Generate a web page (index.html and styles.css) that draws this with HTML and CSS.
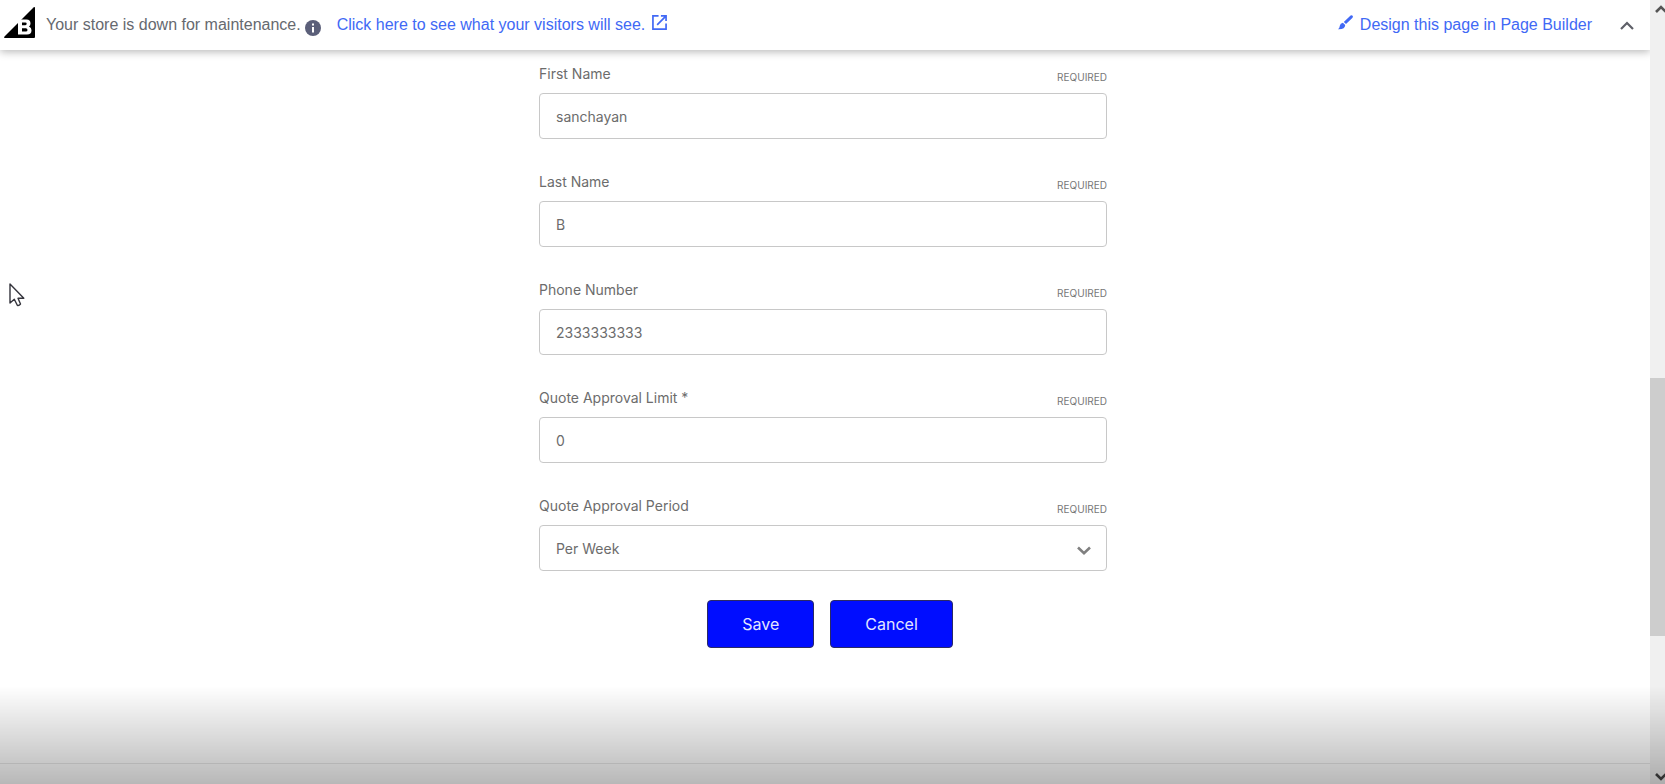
FILE: index.html
```html
<!DOCTYPE html>
<html lang="en">
<head>
<meta charset="utf-8">
<title>Edit user</title>
<link rel="stylesheet" href="styles.css">
</head>
<body>
<div class="page">
  <header class="topbar">
    <svg class="logo" viewBox="0 0 31 31" aria-hidden="true">
      <path fill="#000" d="M29.500 .4Q31 -.4 31 1V30Q31 31 30 31H1Q-.4 31 .5 29.600Z"/>
      <path fill="#fff" fill-rule="evenodd" d="M14 12.500H22.500Q26.500 12.500 26.500 16.500Q26.500 18.500 25 19.500Q27.500 20.500 27.500 23.200Q27.500 27.500 23 27.500H14ZM18 15.400V18.200H21.300Q22.700 18.200 22.700 16.800T21.300 15.400ZM18 21.200V24.600H21.800Q23.500 24.600 23.500 22.900T21.800 21.200Z"/>
    </svg>
    <span class="status">Your store is down for maintenance.</span>
    <svg class="info" viewBox="0 0 16 16" aria-hidden="true">
      <circle cx="8" cy="8" r="8" fill="#5b5f79"/>
      <path fill="#fff" d="M7 3.500h2v2H7zM7 7h2v5.500H7z"/>
    </svg>
    <a class="link" href="#">Click here to see what your visitors will see.
      <svg class="open" viewBox="0 0 16 16" aria-hidden="true">
        <path fill="none" stroke="#4169f5" stroke-width="1.800" d="M7 1H1V15H15V9M9.500 1H15V6.500M15 1L5.500 10.500"/>
      </svg>
    </a>
    <a class="link design" href="#">
      <svg class="brush" viewBox="0 0 15 15" aria-hidden="true">
        <path fill="#4169f5" d="M12.600 .5Q13.800 -.3 14.600 .7T14.300 2.900L8 9.100L5.800 6.900ZM4.900 7.700L7.200 10Q7.200 14.500 0 14.200Q1.700 13 1.900 10.600Q2.200 8 4.900 7.700Z"/>
      </svg>
      Design this page in Page Builder</a>
    <button class="collapse" type="button" aria-label="Collapse">
      <svg viewBox="0 0 14 9" aria-hidden="true"><path fill="none" stroke="#5f6068" stroke-width="2.200" d="M1 8L7 2L13 8"/></svg>
    </button>
  </header>

  <main class="content">
    <form class="form">
      <div class="field">
        <label for="first">First Name</label><small>REQUIRED</small>
        <input id="first" type="text" value="sanchayan">
      </div>
      <div class="field">
        <label for="last">Last Name</label><small>REQUIRED</small>
        <input id="last" type="text" value="B">
      </div>
      <div class="field">
        <label for="phone">Phone Number</label><small>REQUIRED</small>
        <input id="phone" type="text" value="2333333333">
      </div>
      <div class="field">
        <label for="limit">Quote Approval Limit *</label><small>REQUIRED</small>
        <input id="limit" type="text" value="0">
      </div>
      <div class="field">
        <label for="period">Quote Approval Period</label><small>REQUIRED</small>
        <div class="select">
          <select id="period"><option>Per Week</option></select>
          <svg class="chevron" viewBox="0 0 14 9" aria-hidden="true"><path fill="none" stroke="#808080" stroke-width="2.600" d="M1 1.500L7 7.200L13 1.500"/></svg>
        </div>
      </div>
      <div class="actions">
        <button class="btn" type="submit">Save</button>
        <button class="btn" type="button">Cancel</button>
      </div>
    </form>
  </main>
  <footer class="footer"></footer>
</div>

<div class="scrollbar" aria-hidden="true">
  <svg class="arrow" viewBox="0 0 12 8"><path fill="none" stroke="#555" stroke-width="2.600" d="M1 7L6 2L11 7"/></svg>
  <div class="track"><div class="thumb"></div></div>
  <svg class="arrow" viewBox="0 0 12 8"><path fill="none" stroke="#444" stroke-width="2.600" d="M1 1L6 6L11 1"/></svg>
</div>

<div class="shade"></div>
<svg class="cursor" viewBox="0 0 16 24" aria-hidden="true">
  <path fill="#fff" stroke="#34343c" stroke-width="1.400" stroke-linejoin="round" d="M1 1V20L5.300 16.200L8.300 22.300Q10 23 11.500 21L9 15.300H14.800Z"/>
</svg>
</body>
</html>
```
FILE: styles.css
```css
* { box-sizing: border-box; }

body {
  margin: 0;
  display: flex;
  height: 100vh;
  overflow: hidden;
  background: #fff;
  color: #6c6c6c;
  font-family: Inter, sans-serif;
  font-size: 14px;
}

.page {
  flex: 1;
  display: flex;
  flex-direction: column;
}

.topbar {
  display: flex;
  align-items: center;
  height: 50px;
  padding: 0 8px 0 4px;
  background: #fff;
  box-shadow: 0 2px 8px rgba(0, 0, 0, 0.28);
  color: #66696f;
  font-family: "Liberation Sans", Arial, sans-serif;
  font-size: 16px;
  line-height: 24px;
}
.logo { width: 31px; height: 31px; margin: 0 11px 6px 0; }
.info { width: 16px; height: 16px; margin: 6px 16px 0 4px; }
.link { color: #4169f5; text-decoration: none; }
.open { width: 15px; height: 15px; margin-left: 2px; }
.design { margin-left: auto; }
.brush { width: 15px; height: 15px; margin-right: 2px; }
.collapse {
  display: flex;
  margin-left: 20px;
  padding: 8px;
  border: 0;
  background: none;
}
.collapse svg { width: 14px; height: 9px; }

.content { flex: 1; padding: 13px 22px 0 18px; }
.form { max-width: 568px; margin: 0 auto; }

.field {
  display: grid;
  grid-template-columns: 1fr auto;
  grid-template-rows: 30px 46px;
  margin-bottom: 32px;
}
.field:nth-last-child(2) { margin-bottom: 29px; }
.field label { line-height: 22px; }
.field small {
  padding-top: 3px;
  font-size: 10px;
  line-height: 22px;
  color: #777;
}
.field input, .select { grid-column: 1 / -1; }
.field input, .field select {
  width: 100%;
  height: 46px;
  padding: 0 16px;
  border: 1px solid #c8c8c8;
  border-radius: 4px;
  background: #fff;
  color: #6c6c6c;
  font: inherit;
}
.field select { appearance: none; }
.select { position: relative; }
.chevron {
  position: absolute;
  right: 16px;
  top: 21px;
  width: 14px;
  height: 9px;
  pointer-events: none;
}

.actions {
  display: flex;
  justify-content: center;
  gap: 16px;
  padding-left: 14px;
}
.btn {
  height: 48px;
  padding: 0 34px;
  border: 1px solid #2a2a66;
  border-radius: 4px;
  background: #000dff;
  color: #e4e6ff;
  font: inherit;
  font-size: 16px;
}

.footer { height: 21px; border-top: 1px solid #e8e8e8; }

.scrollbar {
  display: flex;
  flex-direction: column;
  align-items: flex-end;
  width: 15px;
  padding: 5px 0 3px;
  background: #f0f0f0;
  overflow: hidden;
}
.arrow { width: 12px; height: 8px; margin-right: -2px; flex: none; }
.track { flex: 1; width: 100%; }
.thumb { position: relative; top: 48%; height: 34%; background: #cdcdcd; }

.shade {
  position: fixed;
  left: 0;
  right: 0;
  bottom: 0;
  height: 98px;
  background: linear-gradient(rgba(0, 0, 0, 0), rgba(0, 0, 0, 0.28));
  pointer-events: none;
}
.cursor {
  position: fixed;
  left: 9px;
  top: 283px;
  width: 16px;
  height: 24px;
  pointer-events: none;
}
```
